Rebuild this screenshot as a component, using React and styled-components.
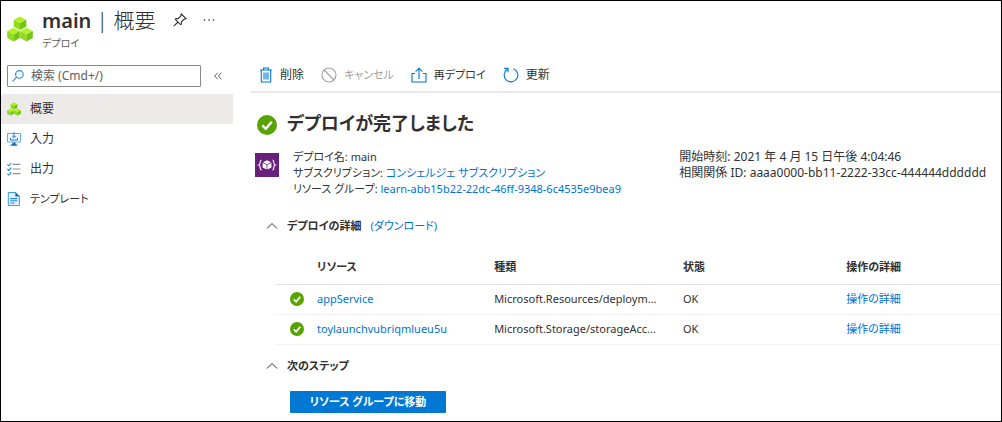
import styled, { createGlobalStyle } from "styled-components";

const GlobalStyle = createGlobalStyle`
    * {
        box-sizing: border-box;
    }
    body {
        margin: 0;
        background-color: #fff;
        color: #323130;
        font-family: "Noto Sans", "Noto Sans CJK JP", sans-serif;
        font-size: 12px;
        line-height: 16px;
        font-feature-settings: "palt";
    }
    h1, h2, h3, p, ul {
        margin: 0;
        padding: 0;
    }
    button, input {
        font: inherit;
        font-feature-settings: inherit;
        color: inherit;
    }
    svg {
        display: block;
        flex-shrink: 0;
    }
`
const StyledPage = styled.div`
    min-height: 100vh;
    border: 1px solid #000;
`
const StyledHeader = styled.header`
    display: flex;
    align-items: flex-start;
    gap: 9px;
    height: 64px;
    padding: 5px 6px;
`
const StyledHeaderIcon = styled.div`
    padding-top: 10px;
`
const StyledTitleRow = styled.div`
    display: flex;
    align-items: center;
    height: 28px;
`
const StyledTitle = styled.h1`
    font-size: 20px;
    font-weight: 600;
    line-height: 28px;
    margin-right: 18px;

    span {
        font-size: 21px;
        font-weight: 300;
    }
`
const StyledSubtitle = styled.p`
    font-size: 10px;
    line-height: 18px;
    color: #605e5c;
`
const StyledIconButton = styled.button`
    display: flex;
    padding: 0;
    border: none;
    background: none;
    margin-right: ${({ $gap }) => $gap || 0}px;
`
const StyledColumns = styled.div`
    display: grid;
    grid-template-columns: 232px minmax(0, 1fr);
    gap: 18px;
`
const StyledSearchRow = styled.div`
    display: flex;
    align-items: center;
    gap: 13px;
    padding: 0 6px 7px;
`
const StyledSearchBox = styled.label`
    display: flex;
    align-items: center;
    gap: 7px;
    width: 194px;
    height: 22px;
    padding: 0 4px;
    border: 1px solid #8a8886;
    border-radius: 1px;
`
const StyledSearchInput = styled.input`
    flex: 1;
    min-width: 0;
    padding: 0;
    border: none;
    outline: none;
    background: none;

    &::placeholder {
        color: #605e5c;
        opacity: 1;
    }
`
const StyledMenu = styled.ul`
    list-style: none;
`
const StyledMenuLink = styled.a`
    display: flex;
    align-items: center;
    gap: 9px;
    height: 30px;
    padding: 0 6px;
    color: #323130;
    font-size: ${({ $compact }) => ($compact ? 11 : 12)}px;
    text-decoration: none;
    background-color: ${({ $active }) => ($active ? "#edebe9" : "transparent")};
`
const StyledToolbar = styled.div`
    display: flex;
    align-items: center;
    gap: 17px;
    height: 28px;
    padding: 0 8px 6px;
    border-bottom: 2px solid #eaeaea;
`
const StyledToolButton = styled.button`
    display: flex;
    align-items: center;
    gap: 7px;
    padding: 0;
    border: none;
    background: none;
    font-size: ${({ $compact }) => ($compact ? 11 : 12)}px;
    white-space: nowrap;

    &:disabled {
        color: #a19f9d;
    }
`
const StyledStatus = styled.div`
    display: flex;
    align-items: flex-end;
    gap: 10px;
    padding: 16px 6px 12px;
`
const StyledStatusIcon = styled.div`
    padding-bottom: 2px;
`
const StyledStatusTitle = styled.h2`
    font-size: 18px;
    font-weight: 600;
    line-height: 28px;
`
const StyledSummary = styled.div`
    display: flex;
    align-items: flex-start;
    padding-left: 4px;
`
const StyledFacts = styled.div`
    flex: ${({ $grow }) => $grow} 1 0;
    min-width: 0;
    padding-left: ${({ $indent }) => $indent || 0}px;
    font-size: ${({ $compact }) => ($compact ? 11 : 12)}px;
    white-space: nowrap;
`
const StyledTile = styled.div`
    padding-top: 4px;
`
const StyledLink = styled.a`
    color: #0072d6;
    text-decoration: none;
`
const StyledSectionHead = styled.div`
    display: flex;
    align-items: center;
    gap: 9px;
    height: 20px;
    padding-left: 15px;
    margin-top: ${({ $top }) => $top}px;
    font-size: 11px;
`
const StyledSectionTitle = styled.h3`
    font-size: 11px;
    font-weight: 600;
`
const StyledTableWrap = styled.div`
    padding-left: 24px;
    margin-top: 14px;
`
const StyledTable = styled.table`
    width: 100%;
    table-layout: fixed;
    border-collapse: collapse;
    font-size: 11px;

    th, td {
        height: 30px;
        padding: 0;
        text-align: left;
        overflow: hidden;
        text-overflow: ellipsis;
        white-space: nowrap;
        border-bottom: 1px solid #f3f2f1;
    }
    th {
        height: 34px;
        font-weight: 600;
        border-bottom: 1px solid #e6e5e4;
    }
    td:first-child {
        padding-left: 15px;
    }
`
const StyledCol = styled.col`
    width: ${({ $width }) => $width};
`
const StyledPrimaryButton = styled.button`
    display: block;
    min-width: 156px;
    height: 22px;
    margin: 15px 0 8px 39px;
    padding: 0 16px;
    border: none;
    border-radius: 1px;
    background-color: #0078d4;
    color: #fff;
    font-size: 11px;
    font-weight: 600;
`

const Cube = ({ x, y }) => (
    <g transform={`translate(${x} ${y})`}>
        <path d="M6.3 0 12.6 3.3 6.3 6.8 0 3.3Z" fill="#b4f026" />
        <path d="M0 3.3 6.3 6.8V13.6L0 10.2Z" fill="#8ddb1c" />
        <path d="M12.6 3.3 6.3 6.8V13.6L12.6 10.2Z" fill="#72c510" />
    </g>
)

const CubesIcon = ({ size }) => (
    <svg width={size} height={size} viewBox="0 0 26 26" aria-hidden="true">
        <Cube x={6.7} y={0.5} />
        <Cube x={0.2} y={11.8} />
        <Cube x={13.2} y={11.8} />
    </svg>
)

const PinIcon = () => (
    <svg width="14" height="14" viewBox="0 0 14 14" fill="none" stroke="#323130" strokeWidth="1.1">
        <path d="M8.3 1 13 5.7 12 6.2 11.2 6 8.6 8.6 8.4 11.1 7.6 11.6 2.4 6.4 2.9 5.6 5.4 5.4 8 2.8 7.8 2Z M5 9 .8 13.2" />
    </svg>
)

const MoreIcon = () => (
    <svg width="12" height="4" viewBox="0 0 12 4" fill="#323130">
        <circle cx="1.5" cy="2" r=".8" />
        <circle cx="6" cy="2" r=".8" />
        <circle cx="10.5" cy="2" r=".8" />
    </svg>
)

const SearchIcon = () => (
    <svg width="12" height="12" viewBox="0 0 12 12" fill="none" stroke="#2b88d8" strokeWidth="1.1">
        <circle cx="7.4" cy="4.4" r="3.8" />
        <path d="M4.7 7.1.5 11.3" />
    </svg>
)

const CollapseIcon = () => (
    <svg width="8" height="8" viewBox="0 0 8 8" fill="none" stroke="#605e5c">
        <path d="M3.7.7.7 4l3 3.3M7.4.7l-3 3.3 3 3.3" />
    </svg>
)

const InputsIcon = () => (
    <svg width="14" height="14" viewBox="0 0 14 14" aria-hidden="true">
        <path d="M.5 1.5H13.5V10H.5Z" fill="#eef8fe" stroke="#5fb2ee" />
        <path d="M5.6 10.5h2.800L8.800 12.500h1.600v1.200H3.600v-1.200H5.200Z" fill="#1b66b8" />
        <path d="M7 0V5.400M5.200 3.900 7 5.700 8.800 3.900M3.500 6V8H10.500V6" fill="none" stroke="#1b7fd0" />
    </svg>
)

const OutputsIcon = () => (
    <svg width="14" height="14" viewBox="0 0 14 14" fill="none" aria-hidden="true">
        <path d="M5.5 2.4H13.5M5.5 7H13.5M5.5 11.6H13.5" stroke="#8f9396" strokeWidth="1.2" />
        <path d="M.4 2.4 1.8 3.8 4.3 1M.4 7 1.8 8.4 4.3 5.6M.4 11.6 1.8 13 4.3 10.2" stroke="#0f86e0" strokeWidth="1.1" />
    </svg>
)

const TemplateIcon = () => (
    <svg width="14" height="14" viewBox="0 0 14 14" aria-hidden="true">
        <path d="M1.3.5H8.6L12.4 4.3V13.5H1.3Z" fill="#e2f2fd" stroke="#3d9be6" />
        <path d="M8.3 0 12.9 4.6H8.3Z" fill="#0f6cc0" />
        <path d="M3.2 6.6H10.4M3.2 8.8H10.4M3.2 11H7.6" stroke="#2b88d8" strokeWidth="1.1" />
    </svg>
)

const TrashIcon = () => (
    <svg width="14" height="16" viewBox="0 0 14 16" fill="none" stroke="#0078d4" strokeWidth="1.1">
        <path d="M1 3H13M4.6 2.8V1H9.4V2.8M2.3 3V15H11.7V3M5 5.5V12.6M7 5.5V12.6M9 5.5V12.6" />
    </svg>
)

const CancelIcon = () => (
    <svg width="16" height="16" viewBox="0 0 16 16" fill="none" stroke="#a19f9d" strokeWidth="1.1">
        <circle cx="8" cy="8" r="7" />
        <path d="M3 3 13 13" />
    </svg>
)

const RedeployIcon = () => (
    <svg width="16" height="16" viewBox="0 0 16 16" fill="none" stroke="#0078d4" strokeWidth="1.1">
        <path d="M4 6.5H1V15H15V6.5H12M8 12V1.3M4.6 4.6 8 1.2 11.4 4.6" />
    </svg>
)

const RefreshIcon = () => (
    <svg width="16" height="16" viewBox="0 0 16 16" fill="none" stroke="#0078d4" strokeWidth="1.1">
        <path d="M10.4 1.7A6.8 6.8 0 1 1 4.4 2.3M1.2 1.4H5V5.3" />
    </svg>
)

const SuccessIcon = ({ size }) => (
    <svg width={size} height={size} viewBox="0 0 20 20" role="img" aria-label="OK">
        <circle cx="10" cy="10" r="10" fill="#57a300" />
        <path d="M5.3 10.4 8.8 13.8 14.8 6.7" fill="none" stroke="#fff" strokeWidth="2.4" />
    </svg>
)

const DeploymentIcon = () => (
    <svg width="24" height="24" viewBox="0 0 24 24" aria-hidden="true">
        <rect width="24" height="24" fill="#68217a" />
        <path d="M6.6 7C5.2 7 5.2 7.8 5.2 9s.1 2.6-1.4 3C5.3 12.4 5.2 13.8 5.2 15s0 2 1.4 2M17.4 7c1.4 0 1.4.8 1.4 2s-.1 2.6 1.4 3c-1.500.4-1.400 1.800-1.400 3s0 2-1.400 2" fill="none" stroke="#fff" strokeWidth="1.1" />
        <path d="M12 7.3 16 9.3 12 11.4 8 9.3Z M7.6 10 11.6 12.1V16.6L7.6 14.5Z M16.4 10 12.4 12.1V16.6L16.4 14.5Z" fill="#fff" />
    </svg>
)

const ChevronUpIcon = () => (
    <svg width="12" height="8" viewBox="0 0 12 8" fill="none" stroke="#323130">
        <path d="M1 6.5 6 1.5 11 6.5" />
    </svg>
)

const menuItems = [
    { label: "概要", icon: <CubesIcon size={14} />, active: true },
    { label: "入力", icon: <InputsIcon /> },
    { label: "出力", icon: <OutputsIcon /> },
    { label: "テンプレート", icon: <TemplateIcon />, compact: true },
]

const tools = [
    { label: "削除", icon: <TrashIcon /> },
    { label: "キャンセル", icon: <CancelIcon />, disabled: true, compact: true },
    { label: "再デプロイ", icon: <RedeployIcon />, compact: true },
    { label: "更新", icon: <RefreshIcon /> },
]

const resources = [
    { name: "appService", type: "Microsoft.Resources/deploym...", state: "OK" },
    { name: "toylaunchvubriqmlueu5u", type: "Microsoft.Storage/storageAcc...", state: "OK" },
]

const App = () => {
    return (
        <StyledPage lang="ja">
            <GlobalStyle />
            <StyledHeader>
                <StyledHeaderIcon><CubesIcon size={26} /></StyledHeaderIcon>
                <div>
                    <StyledTitleRow>
                        <StyledTitle>main <span>| 概要</span></StyledTitle>
                        <StyledIconButton $gap={16} aria-label="ピン留め"><PinIcon /></StyledIconButton>
                        <StyledIconButton aria-label="その他"><MoreIcon /></StyledIconButton>
                    </StyledTitleRow>
                    <StyledSubtitle>デプロイ</StyledSubtitle>
                </div>
            </StyledHeader>
            <StyledColumns>
                <nav>
                    <StyledSearchRow>
                        <StyledSearchBox>
                            <SearchIcon />
                            <StyledSearchInput type="text" placeholder="検索 (Cmd+/)" aria-label="検索" />
                        </StyledSearchBox>
                        <StyledIconButton aria-label="折りたたむ"><CollapseIcon /></StyledIconButton>
                    </StyledSearchRow>
                    <StyledMenu>
                        {menuItems.map(({ label, icon, active, compact }) => (
                            <li key={label}>
                                <StyledMenuLink href="#" $active={active} $compact={compact}>{icon}{label}</StyledMenuLink>
                            </li>
                        ))}
                    </StyledMenu>
                </nav>
                <main>
                    <StyledToolbar>
                        {tools.map(({ label, icon, disabled, compact }) => (
                            <StyledToolButton key={label} disabled={disabled} $compact={compact}>{icon}{label}</StyledToolButton>
                        ))}
                    </StyledToolbar>
                    <StyledStatus>
                        <StyledStatusIcon><SuccessIcon size={20} /></StyledStatusIcon>
                        <StyledStatusTitle>デプロイが完了しました</StyledStatusTitle>
                    </StyledStatus>
                    <StyledSummary>
                        <StyledTile><DeploymentIcon /></StyledTile>
                        <StyledFacts $grow={394} $indent={14} $compact>
                            <p>デプロイ名: main</p>
                            <p>サブスクリプション: <StyledLink href="#">コンシェルジェ サブスクリプション</StyledLink></p>
                            <p>リソース グループ: <StyledLink href="#">learn-abb15b22-22dc-46ff-9348-6c4535e9bea9</StyledLink></p>
                        </StyledFacts>
                        <StyledFacts $grow={328}>
                            <p>開始時刻: 2021 年 4 月 15 日午後 4:04:46</p>
                            <p>相関関係 ID: aaaa0000-bb11-2222-33cc-444444dddddd</p>
                        </StyledFacts>
                    </StyledSummary>
                    <StyledSectionHead $top={19}>
                        <StyledIconButton aria-label="デプロイの詳細を閉じる"><ChevronUpIcon /></StyledIconButton>
                        <StyledSectionTitle>デプロイの詳細</StyledSectionTitle>
                        <StyledLink href="#">(ダウンロード)</StyledLink>
                    </StyledSectionHead>
                    <StyledTableWrap>
                        <StyledTable>
                            <colgroup>
                                <StyledCol $width="42px" />
                                <StyledCol $width="24.4%" />
                                <StyledCol $width="26%" />
                                <StyledCol $width="22.5%" />
                                <StyledCol $width="auto" />
                            </colgroup>
                            <thead>
                                <tr>
                                    <th aria-label="結果" />
                                    <th>リソース</th>
                                    <th>種類</th>
                                    <th>状態</th>
                                    <th>操作の詳細</th>
                                </tr>
                            </thead>
                            <tbody>
                                {resources.map(({ name, type, state }) => (
                                    <tr key={name}>
                                        <td><SuccessIcon size={14} /></td>
                                        <td><StyledLink href="#">{name}</StyledLink></td>
                                        <td>{type}</td>
                                        <td>{state}</td>
                                        <td><StyledLink href="#">操作の詳細</StyledLink></td>
                                    </tr>
                                ))}
                            </tbody>
                        </StyledTable>
                    </StyledTableWrap>
                    <StyledSectionHead $top={11}>
                        <StyledIconButton aria-label="次のステップを閉じる"><ChevronUpIcon /></StyledIconButton>
                        <StyledSectionTitle>次のステップ</StyledSectionTitle>
                    </StyledSectionHead>
                    <StyledPrimaryButton>リソース グループに移動</StyledPrimaryButton>
                </main>
            </StyledColumns>
        </StyledPage>
    )
}

export default App
